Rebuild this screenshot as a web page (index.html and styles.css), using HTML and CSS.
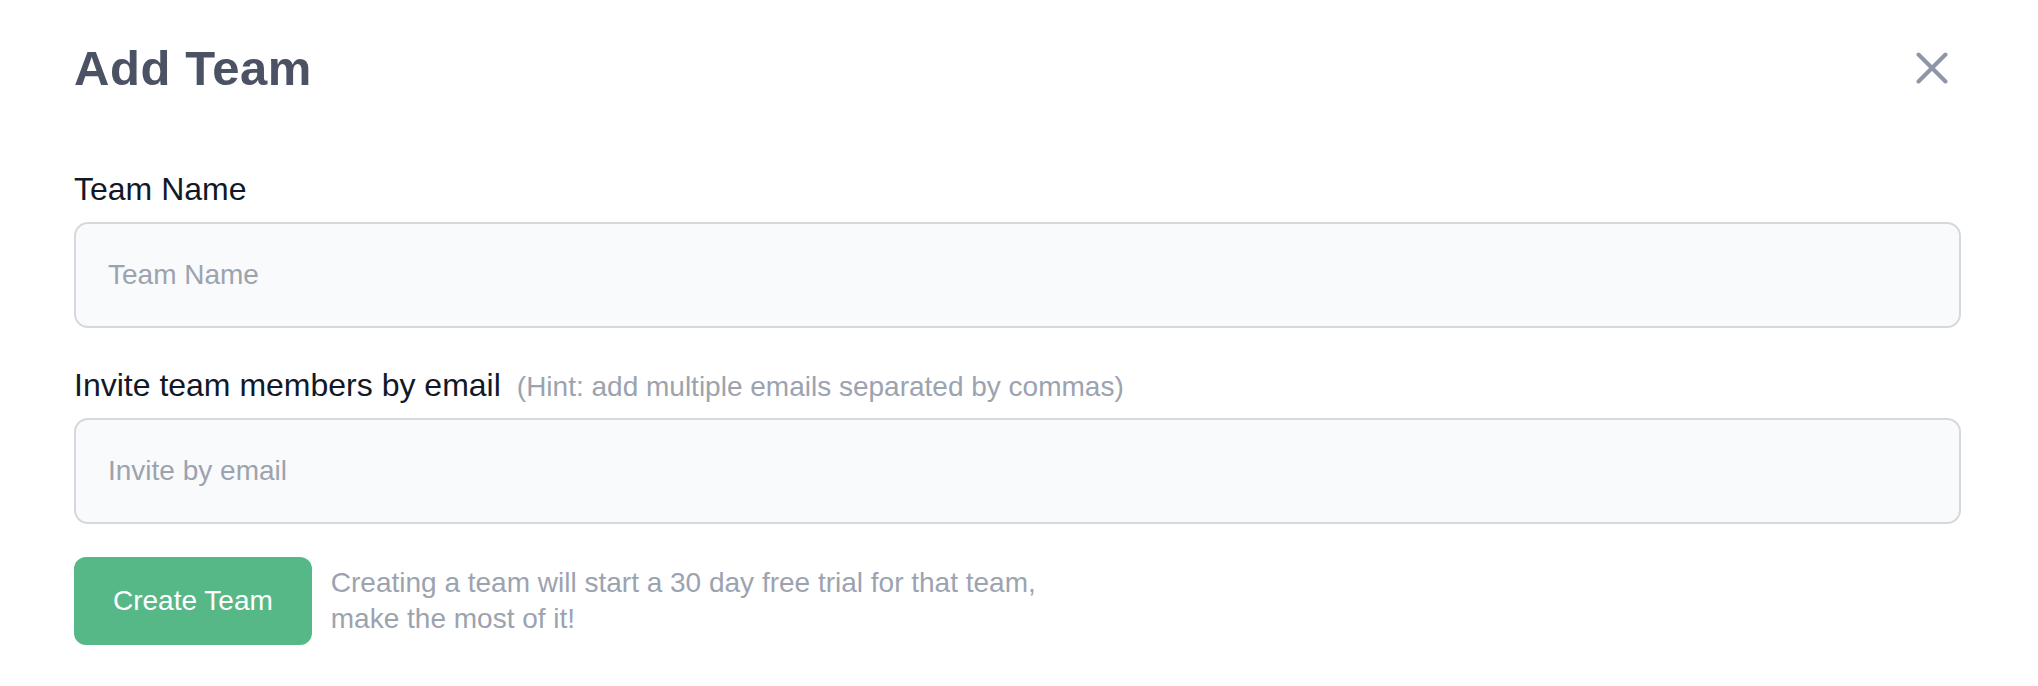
FILE: index.html
```html
<!DOCTYPE html>
<html lang="en">
<head>
<meta charset="utf-8">
<title>Add Team</title>
<link rel="stylesheet" href="styles.css">
</head>
<body>
<div class="modal">
  <div class="header">
    <h1 class="title">Add Team</h1>
    <button class="close" type="button" aria-label="Close">
      <svg width="32" height="32" viewBox="0 0 32 32" fill="none" stroke="currentColor" stroke-width="4" stroke-linecap="round">
        <line x1="2.5" y1="2.5" x2="29.5" y2="29.5"/>
        <line x1="29.5" y1="2.5" x2="2.5" y2="29.5"/>
      </svg>
    </button>
  </div>
  <form class="form">
    <div class="field">
      <div class="label-row"><label class="label" for="team-name">Team Name</label></div>
      <input class="input" id="team-name" type="text" placeholder="Team Name">
    </div>
    <div class="field">
      <div class="label-row"><label class="label" for="invite">Invite team members by email</label><span class="hint">(Hint: add multiple emails separated by commas)</span></div>
      <input class="input" id="invite" type="text" placeholder="Invite by email">
    </div>
    <div class="actions">
      <button class="btn" type="button">Create Team</button>
      <p class="desc">Creating a team will start a 30 day free trial for that team, make the most of it!</p>
    </div>
  </form>
</div>
</body>
</html>
```
FILE: styles.css
```css
* { box-sizing: border-box; }

body {
  margin: 0;
  background: #ffffff;
  font-family: "Liberation Sans", Arial, Helvetica, sans-serif;
  color: #111827;
}

.modal {
  padding: 38px 77px 0 74px;
}

.header {
  display: flex;
  justify-content: space-between;
  align-items: center;
  height: 60px;
}

.title {
  margin: 0;
  font-size: 49px;
  line-height: 60px;
  font-weight: 700;
  letter-spacing: 0.6px;
  color: #4b5263;
}

.close {
  display: flex;
  width: 32px;
  height: 32px;
  padding: 0;
  margin-right: 13px;
  border: 0;
  background: none;
  color: #8e96a8;
  cursor: pointer;
}

.form {
  margin-top: 67px;
}

.field {
  margin-bottom: 33px;
}

.label-row {
  height: 48px;
  font-size: 32px;
  line-height: 48px;
  margin-bottom: 9px;
  white-space: nowrap;
}

.label {
  color: #111827;
}

.hint {
  margin-left: 16px;
  font-size: 28px;
  line-height: 1;
  color: #9ca3af;
}

.input {
  display: block;
  width: 100%;
  height: 106px;
  padding: 0 32px;
  border: 2px solid #d5d8dd;
  border-radius: 14px;
  background: #f9fafb;
  font-family: inherit;
  font-size: 28px;
  color: #111827;
  outline: none;
}

.input::placeholder {
  color: #9ca3af;
  opacity: 1;
}

.actions {
  display: flex;
  align-items: center;
  gap: 19px;
}

.btn {
  height: 88px;
  padding: 0 39px;
  border: 0;
  border-radius: 12px;
  background: #57b887;
  color: #ffffff;
  font-family: inherit;
  font-size: 28px;
  cursor: pointer;
}

.desc {
  margin: 0;
  max-width: 720px;
  font-size: 28px;
  line-height: 36px;
  color: #9ca3af;
}
```
